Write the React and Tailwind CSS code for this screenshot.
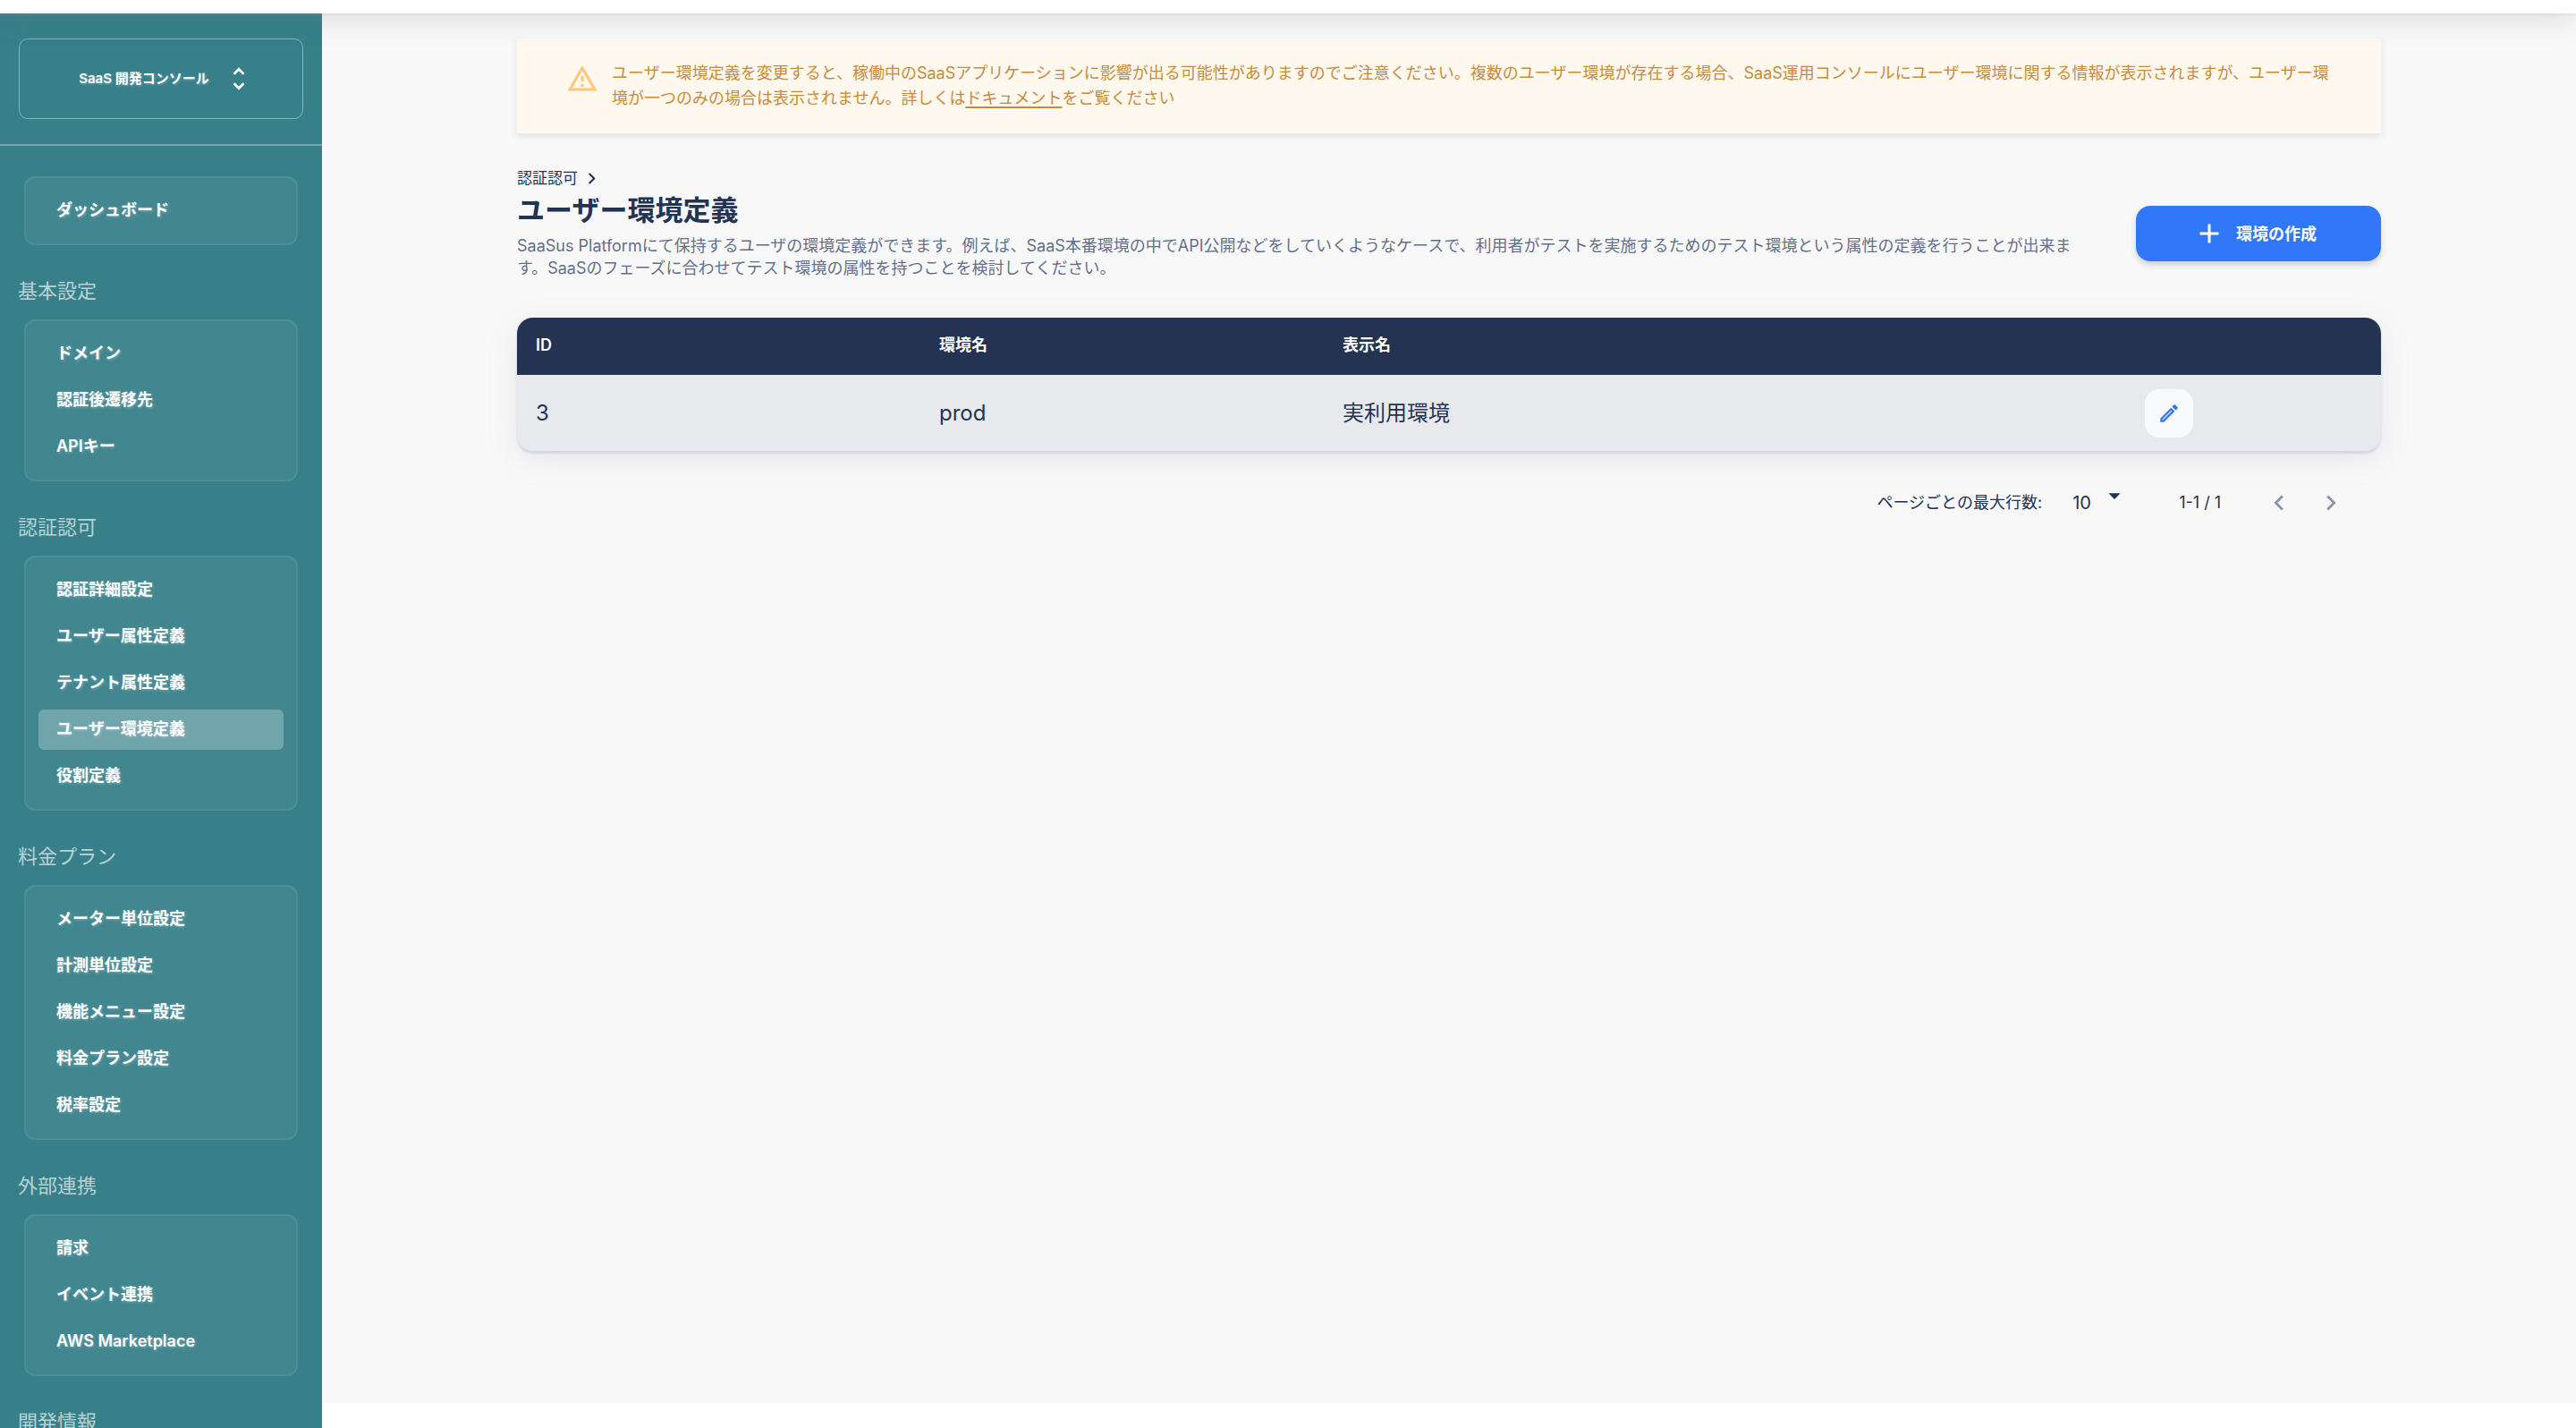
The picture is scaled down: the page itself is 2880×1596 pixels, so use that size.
import React from "react";

const SECTIONS = [
  { items: ["ダッシュボード"] },
  { title: "基本設定", items: ["ドメイン", "認証後遷移先", "APIキー"] },
  { title: "認証認可", items: ["認証詳細設定", "ユーザー属性定義", "テナント属性定義", "ユーザー環境定義", "役割定義"] },
  { title: "料金プラン", items: ["メーター単位設定", "計測単位設定", "機能メニュー設定", "料金プラン設定", "税率設定"] },
  { title: "外部連携", items: ["請求", "イベント連携", "AWS Marketplace"] },
  { title: "開発情報", items: [] },
];
const ACTIVE = "ユーザー環境定義";

function Icon({ d, className }) {
  return (
    <svg viewBox="0 0 24 24" fill="currentColor" aria-hidden="true" className={className}>
      <path d={d} />
    </svg>
  );
}

const ICONS = {
  unfold: "M12 5.83 15.17 9l1.41-1.41L12 3 7.41 7.59 8.83 9 12 5.83zm0 12.34L8.83 15l-1.41 1.41L12 21l4.59-4.59L15.17 15 12 18.17z",
  warning: "M12 5.99 19.53 19H4.47L12 5.99M12 2 1 21h22L12 2zm1 14h-2v2h2v-2zm0-6h-2v4h2v-4z",
  right: "M10 6 8.59 7.41 13.17 12l-4.58 4.59L10 18l6-6z",
  left: "M15.41 7.41 14 6l-6 6 6 6 1.41-1.41L10.83 12z",
  add: "M19 13h-6v6h-2v-6H5v-2h6V5h2v6h6v2z",
  down: "m7 10 5 5 5-5z",
};

function Sidebar() {
  return (
    <aside className="w-[360px] shrink-0 overflow-hidden bg-[#37808a]">
      <div className="border-b-2 border-white/30 px-[21px] py-7">
        <button type="button" className="flex h-[90px] w-full items-center justify-center gap-4 rounded-[10px] border border-white/40 pl-3 text-[15px] font-semibold text-white [text-shadow:1px_1px_3px_rgba(255,255,255,0.3)]">
          SaaS 開発コンソール
          <Icon d={ICONS.unfold} className="size-[34px]" />
        </button>
      </div>
      <nav className="pt-[34px]">
        {SECTIONS.map((s, i) => (
          <section key={i}>
            {s.title && <h2 className="mt-[35px] mb-4 px-5 text-[22px] leading-8 text-[#b9d2d6]">{s.title}</h2>}
            {s.items.length > 0 && (
              <ul className="mx-[27px] flex flex-col gap-[7px] rounded-xl border-2 border-white/5 bg-white/6 p-[14px]">
                {s.items.map((item) => (
                  <li key={item}>
                    <a
                      href="#"
                      className={
                        "block h-[45px] rounded-md px-5 text-[18px] leading-[43px] font-semibold text-white [text-shadow:1px_1px_3px_rgba(255,255,255,0.3)] " +
                        (item === ACTIVE ? "bg-white/25" : "")
                      }
                    >
                      {item}
                    </a>
                  </li>
                ))}
              </ul>
            )}
          </section>
        ))}
      </nav>
    </aside>
  );
}

function Alert() {
  return (
    <div role="alert" className="flex gap-[15px] bg-[#fff8ee] px-[55px] py-[25px] text-[18px] leading-7 text-[#c98b3a] shadow-[0_4px_8px_rgba(34,51,84,0.1)]">
      <Icon d={ICONS.warning} className="mt-0.5 size-9 shrink-0 text-[#ffc677]" />
      <p>
        ユーザー環境定義を変更すると、稼働中のSaaSアプリケーションに影響が出る可能性がありますのでご注意ください。複数のユーザー環境が存在する場合、SaaS運用コンソールにユーザー環境に関する情報が表示されますが、ユーザー環境が一つのみの場合は表示されません。詳しくは
        <a href="#" className="underline decoration-2 underline-offset-3">ドキュメント</a>
        をご覧ください
      </p>
    </div>
  );
}

function PageHeader() {
  return (
    <div className="mt-9 flex items-center gap-7">
      <div className="flex-1">
        <a href="#" className="flex items-center gap-[3px] text-[17px] leading-7">
          認証認可
          <Icon d={ICONS.right} className="size-[25px]" />
        </a>
        <h1 className="text-[31px] leading-[44px] font-bold">ユーザー環境定義</h1>
        <p className="mt-[5px] pr-7 text-[18px] leading-[25px] text-[#646f88]">
          SaaSus Platformにて保持するユーザの環境定義ができます。例えば、SaaS本番環境の中でAPI公開などをしていくようなケースで、利用者がテストを実施するためのテスト環境という属性の定義を行うことが出来ます。SaaSのフェーズに合わせてテスト環境の属性を持つことを検討してください。
        </p>
      </div>
      <button type="button" className="mt-[25px] flex h-[62px] w-[274px] shrink-0 items-center justify-center gap-3 rounded-2xl bg-[#3077fa] pr-2 text-[18px] font-bold text-white shadow-[0_4px_6px_rgba(34,51,84,0.2)]">
        <Icon d={ICONS.add} className="size-9" />
        環境の作成
      </button>
    </div>
  );
}

function EnvTable() {
  return (
    <div className="mt-[43px] overflow-hidden rounded-[18px] bg-[#e8e9ed] shadow-[0_9px_32px_rgba(159,162,191,0.18),0_3px_3px_rgba(159,162,191,0.32)]">
      <table className="w-full table-fixed text-left">
        <colgroup>
          <col className="w-[451px]" />
          <col className="w-[451px]" />
          <col />
          <col className="w-[285px]" />
        </colgroup>
        <thead className="bg-[#243352] text-[18px] text-white">
          <tr className="h-16">
            <th className="px-[21px] pb-[3px] font-semibold">ID</th>
            <th className="px-[21px] pb-[3px] font-semibold">環境名</th>
            <th className="px-[21px] pb-[3px] font-semibold">表示名</th>
            <th aria-label="操作" />
          </tr>
        </thead>
        <tbody className="text-2xl">
          <tr className="h-[85px]">
            <td className="px-[21px]">3</td>
            <td className="px-[21px]">prod</td>
            <td className="px-[21px]">実利用環境</td>
            <td className="px-[21px]">
              <button type="button" aria-label="編集" className="flex size-[54px] items-center justify-center rounded-2xl bg-[#f8fafd] text-[#3077fa]">
                <svg viewBox="0 0 24 24" aria-hidden="true" className="size-[26px]">
                  <path fill="currentColor" opacity=".3" d="M5 18.08V19h.92l9.06-9.06-.92-.92z" />
                  <path fill="currentColor" d="M20.71 7.04c.39-.39.39-1.02 0-1.41l-2.34-2.34c-.2-.2-.45-.29-.71-.29s-.51.1-.7.29l-1.83 1.83 3.75 3.75 1.83-1.83zM3 17.25V21h3.75L17.81 9.94l-3.75-3.75L3 17.25zM5.92 19H5v-.92l9.06-9.06.92.92L5.92 19z" />
                </svg>
              </button>
            </td>
          </tr>
        </tbody>
      </table>
    </div>
  );
}

function Pagination() {
  return (
    <div className="mt-[30px] flex items-center justify-end pr-[39px] text-[18px] leading-7">
      <label htmlFor="rows">ページごとの最大行数:</label>
      <div className="relative mr-[62px] ml-[34px] h-[56px] w-[57px]">
        <select id="rows" defaultValue="10" className="h-full w-full appearance-none bg-transparent text-[20px]">
          <option>10</option>
          <option>25</option>
        </select>
        <Icon d={ICONS.down} className="pointer-events-none absolute top-1 -right-1.5 size-8" />
      </div>
      <span className="mr-12">1-1 / 1</span>
      <button type="button" aria-label="前のページ" className="mr-6 text-[#8c94a8]"><Icon d={ICONS.left} className="size-[34px]" /></button>
      <button type="button" aria-label="次のページ" className="text-[#8c94a8]"><Icon d={ICONS.right} className="size-[34px]" /></button>
    </div>
  );
}

export default function App() {
  return (
    <div lang="ja" className="flex h-screen flex-col overflow-hidden bg-white font-['Inter','Noto_Sans_CJK_JP',sans-serif] text-[#223354]">
      <header className="relative z-10 h-[15px] shrink-0 bg-white shadow-[0_2px_3px_rgba(159,162,191,0.18),0_2px_32px_rgba(100,104,120,0.3)]" />
      <div className="flex min-h-0 flex-1">
        <Sidebar />
        <main className="mb-7 flex-1 bg-[#f8f8f8] px-[218px] pt-7">
          <Alert />
          <PageHeader />
          <EnvTable />
          <Pagination />
        </main>
      </div>
    </div>
  );
}
